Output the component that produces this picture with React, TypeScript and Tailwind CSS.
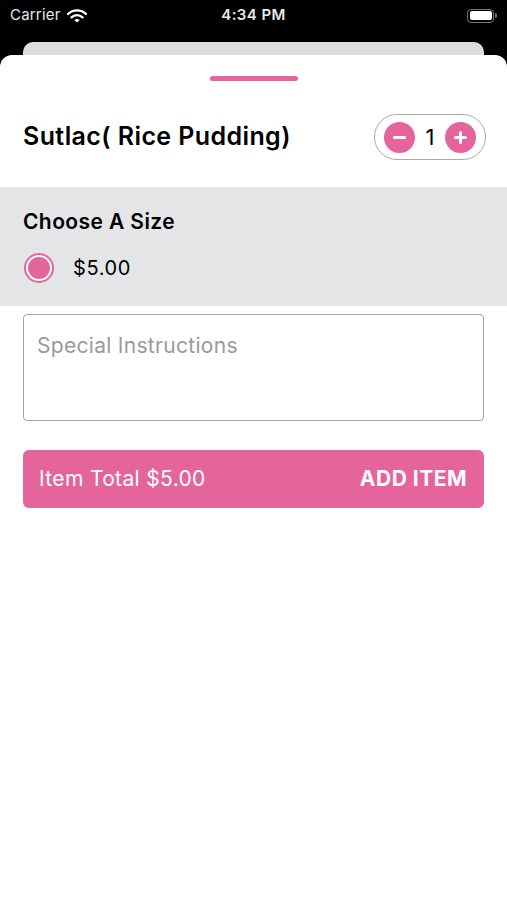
import React from "react";

const PINK = "#e5649b";

export default function App() {
  return (
    <div className="relative w-[507px] h-[900px] bg-black overflow-hidden" style={{ fontFamily: "Inter, 'Liberation Sans', sans-serif" }}>
      {/* status bar */}
      <div className="h-[31px] flex items-center justify-between px-[10px] text-white">
        <div className="flex items-center gap-[6px] w-[120px]">
          <span className="text-[15px] text-[#e8e8e8] tracking-[0.2px]">Carrier</span>
          <svg width="20" height="14" viewBox="0 0 20 14">
            <path d="M1 5 A13 13 0 0 1 19 5" stroke="white" strokeWidth="2.4" fill="none" strokeLinecap="round" />
            <path d="M4.5 8.3 A8 8 0 0 1 15.5 8.3" stroke="white" strokeWidth="2.4" fill="none" strokeLinecap="round" />
            <path d="M10 13.5 L7.4 11 A4 4 0 0 1 12.6 11 Z" fill="white" />
          </svg>
        </div>
        <span className="text-[15px] font-semibold text-[#e8e8e8] tracking-[0.4px]">4:34 PM</span>
        <div className="w-[120px] flex justify-end">
          <div className="flex items-center">
            <div className="w-[27px] h-[14px] rounded-[4px] border-[1.5px] border-[#777] p-[1.5px]">
              <div className="w-full h-full bg-white rounded-[2px]" />
            </div>
            <div className="w-[2px] h-[5px] bg-[#777] rounded-r-sm ml-[1px]" />
          </div>
        </div>
      </div>
      {/* back card */}
      <div className="mx-[23px] mt-[11px] h-[20px] bg-[#dedede] rounded-t-[10px]" />
      {/* sheet */}
      <div className="absolute left-0 right-0 top-[55px] bottom-0 bg-white rounded-t-[12px]">
        <div className="flex justify-center pt-[21px]">
          <div className="w-[88px] h-[5px] rounded-full" style={{ background: PINK }} />
        </div>
        <div className="flex items-center justify-between pl-[23px] pr-[21px] mt-[33px] h-[46px]">
          <span className="text-[25px] font-semibold text-black tracking-[0.4px]">Sutlac( Rice Pudding)</span>
          <div className="flex items-center w-[112px] h-[46px] rounded-full border border-[#a9a9a9] px-[9px] justify-between">
            <div className="w-[31px] h-[31px] rounded-full flex items-center justify-center" style={{ background: PINK }}>
              <div className="w-[13px] h-[3px] bg-white rounded-full" />
            </div>
            <span className="text-[22px] text-black">1</span>
            <div className="w-[31px] h-[31px] rounded-full flex items-center justify-center relative" style={{ background: PINK }}>
              <div className="w-[13px] h-[3px] bg-white rounded-full absolute" />
              <div className="w-[3px] h-[13px] bg-white rounded-full absolute" />
            </div>
          </div>
        </div>
        <div className="mt-[27px] bg-[#e4e5e7] h-[119px] px-[23px] pt-[21px]">
          <div className="text-[21px] font-semibold text-black leading-[28px] tracking-[0.4px]">Choose A Size</div>
          <div className="flex items-center mt-[16px] h-[32px]">
            <div className="w-[30px] h-[30px] rounded-full p-[2px] ml-[1px]" style={{ background: PINK }}>
              <div className="w-full h-full rounded-full bg-white p-[2px]">
                <div className="w-full h-full rounded-full" style={{ background: PINK }} />
              </div>
            </div>
            <span className="ml-[19px] text-[20px] text-black tracking-[0.6px]">$5.00</span>
          </div>
        </div>
        <div className="mx-[23px] mt-[8px] h-[107px] border border-[#a3a3a3] rounded-[4px] px-[13px] pt-[17px]">
          <span className="text-[21px] text-[#9a9a9a] leading-[28px] tracking-[0.3px]">Special Instructions</span>
        </div>
        <div className="mx-[23px] mt-[29px] h-[58px] rounded-[6px] flex items-center justify-between pl-[16px] pr-[17px]" style={{ background: PINK }}>
          <span className="text-[21px] text-white tracking-[0.35px]">Item Total $5.00</span>
          <span className="text-[21px] font-bold text-white tracking-[0.5px]">ADD ITEM</span>
        </div>
      </div>
    </div>
  );
}
